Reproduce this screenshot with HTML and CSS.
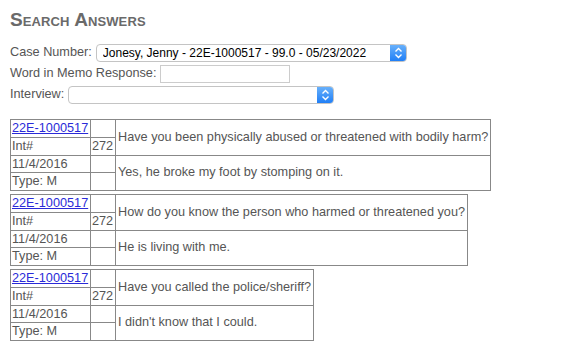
FILE: index.html
```html
<!DOCTYPE html>
<html lang="en">
<head>
    <meta charset="UTF-8">
    <title>Search Answers</title>
    <link rel="stylesheet" href="styles.css">
</head>
<body>
    <h2 class="title">Search Answers</h2>

    <div class="search-form">
        <div class="form-row">
            <label>Case Number:</label>
            <span class="select select-case">
                <select>
                    <option>Jonesy, Jenny - 22E-1000517 - 99.0 - 05/23/2022</option>
                </select>
                <span class="select-btn">
                    <svg width="9" height="12" viewBox="0 0 9 12"><path d="M1.5 4.5 L4.5 1.5 L7.5 4.5 M1.5 7.5 L4.5 10.5 L7.5 7.5" fill="none" stroke="#fff" stroke-width="1.4"/></svg>
                </span>
            </span>
        </div>
        <div class="form-row">
            <label>Word in Memo Response:</label>
            <input type="text" class="memo-input">
        </div>
        <div class="form-row">
            <label>Interview:</label>
            <span class="select select-interview">
                <select>
                    <option></option>
                </select>
                <span class="select-btn">
                    <svg width="9" height="12" viewBox="0 0 9 12"><path d="M1.5 4.5 L4.5 1.5 L7.5 4.5 M1.5 7.5 L4.5 10.5 L7.5 7.5" fill="none" stroke="#fff" stroke-width="1.4"/></svg>
                </span>
            </span>
        </div>
    </div>

    <div class="results">
        <table class="answer">
            <tr>
                <td class="c1"><a href="#">22E-1000517</a></td>
                <td class="c2"></td>
                <td class="c3" rowspan="2">Have you been physically abused or threatened with bodily harm?</td>
            </tr>
            <tr>
                <td class="c1">Int#</td>
                <td class="c2">272</td>
            </tr>
            <tr>
                <td class="c1">11/4/2016</td>
                <td class="c2"></td>
                <td class="c3" rowspan="2">Yes, he broke my foot by stomping on it.</td>
            </tr>
            <tr>
                <td class="c1">Type: M</td>
                <td class="c2"></td>
            </tr>
        </table>

        <table class="answer">
            <tr>
                <td class="c1"><a href="#">22E-1000517</a></td>
                <td class="c2"></td>
                <td class="c3" rowspan="2">How do you know the person who harmed or threatened you?</td>
            </tr>
            <tr>
                <td class="c1">Int#</td>
                <td class="c2">272</td>
            </tr>
            <tr>
                <td class="c1">11/4/2016</td>
                <td class="c2"></td>
                <td class="c3" rowspan="2">He is living with me.</td>
            </tr>
            <tr>
                <td class="c1">Type: M</td>
                <td class="c2"></td>
            </tr>
        </table>

        <table class="answer">
            <tr>
                <td class="c1"><a href="#">22E-1000517</a></td>
                <td class="c2"></td>
                <td class="c3" rowspan="2">Have you called the police/sheriff?</td>
            </tr>
            <tr>
                <td class="c1">Int#</td>
                <td class="c2">272</td>
            </tr>
            <tr>
                <td class="c1">11/4/2016</td>
                <td class="c2"></td>
                <td class="c3" rowspan="2">I didn't know that I could.</td>
            </tr>
            <tr>
                <td class="c1">Type: M</td>
                <td class="c2"></td>
            </tr>
        </table>
    </div>
</body>
</html>
```

FILE: styles.css
```css
body {
    margin: 8px 10px;
    font-family: 'Liberation Sans', Arial, sans-serif;
    font-size: 12.7px;
    color: #555;
    background: #fff;
}

.title {
    margin: 0 0 11px 0;
    font-size: 19px;
    font-variant: small-caps;
    font-weight: bold;
    color: #6a6a6a;
    line-height: 24px;
    letter-spacing: 0.1px;
}

.search-form {
    display: flex;
    flex-direction: column;
    gap: 2px;
}

.form-row {
    display: flex;
    align-items: center;
    gap: 4px;
    height: 19px;
}

.form-row label {
    line-height: 15px;
}

.select {
    display: inline-flex;
    height: 18px;
    border: 1px solid #c4c4c4;
    border-radius: 4px;
    background: #fff;
    box-sizing: border-box;
    overflow: hidden;
}

.select select {
    flex: 1;
    appearance: none;
    -webkit-appearance: none;
    border: none;
    background: transparent;
    font-family: 'Liberation Sans', Arial, sans-serif;
    font-size: 12px;
    color: #000;
    padding: 0 6px;
    margin: 0;
    outline: none;
}

.select-btn {
    width: 17px;
    display: flex;
    align-items: center;
    justify-content: center;
    background: linear-gradient(to bottom, #6cb3fb, #1c7cf6);
    margin: -1px -1px -1px 0;
}

.select-case {
    width: 311px;
}

.select-interview {
    width: 266px;
}

.memo-input {
    width: 130px;
    height: 18px;
    box-sizing: border-box;
    border: 1px solid #ccc;
    padding: 0 3px;
    margin: 0;
    font-size: 12px;
}

.results {
    margin-top: 15px;
}

.answer {
    border-collapse: collapse;
    border: 1px solid #888;
    margin-bottom: 3px;
}

.answer td {
    border: 1px solid #888;
    padding: 1px;
    line-height: 14.75px;
    height: 14.75px;
    white-space: nowrap;
}

.answer .c1 {
    width: 77px;
}

.answer .c2 {
    width: 22px;
}

.answer .c3 {
    padding: 1px 2px;
}

.answer a {
    color: #2a2ad8;
}
```
